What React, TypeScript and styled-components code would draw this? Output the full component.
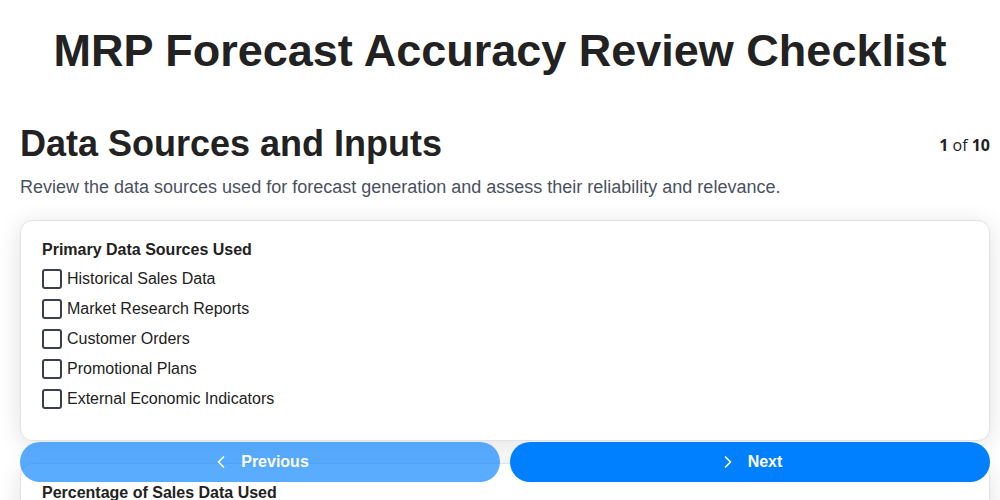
import React from "react";
import styled, { createGlobalStyle } from "styled-components";
import { ChevronLeft, ChevronRight } from "lucide-react";

const GlobalStyle = createGlobalStyle`
  html, body { margin: 0; padding: 0; background: #ffffff; }
  body { font-family: "Liberation Sans", Arial, sans-serif; color: #222222; }
  * { box-sizing: border-box; }
`;

const Page = styled.div`
  padding: 0 10px 80px 20px;
`;

const Title = styled.h1`
  margin: 0 -10px 0 -20px;
  padding-top: 27px;
  text-align: center;
  font-size: 45px;
  line-height: 48px;
  font-weight: 700;
  color: #222222;
`;

const Header = styled.div`
  display: flex;
  justify-content: space-between;
  align-items: flex-start;
  margin-top: 48px;
`;

const StepTitle = styled.h2`
  margin: 0;
  font-size: 36px;
  line-height: 42px;
  font-weight: 700;
  color: #222222;
`;

const Counter = styled.div`
  font-family: "Open Sans", "Liberation Sans", sans-serif;
  font-size: 16px;
  line-height: 20px;
  padding-top: 12px;
  color: #222222;
  b { font-weight: 700; }
`;

const Description = styled.p`
  margin: 10px 0 0;
  font-size: 18px;
  line-height: 24px;
  color: #4a5160;
`;

const Cards = styled.div`
  display: flex;
  flex-direction: column;
  gap: 22px;
  margin-top: 21px;
`;

const Card = styled.div`
  border: 1px solid #e2e2e8;
  border-radius: 12px;
  background: #ffffff;
  box-shadow: 0 4px 24px rgba(0, 0, 0, 0.12);
  padding: 19px 21px 26px;
`;

const QuestionLabel = styled.div`
  font-size: 16px;
  line-height: 20px;
  font-weight: 700;
  color: #222222;
  margin-bottom: 4px;
`;

const OptionList = styled.div`
  display: flex;
  flex-direction: column;
`;

const Option = styled.label`
  display: flex;
  align-items: center;
  gap: 5px;
  height: 30px;
  font-size: 16px;
  color: #222222;
  cursor: pointer;
`;

const Box = styled.span`
  width: 20px;
  height: 20px;
  border: 2px solid #3b3f4c;
  border-radius: 3px;
  background: #ffffff;
  flex-shrink: 0;
`;

const NavBar = styled.div`
  position: fixed;
  left: 20px;
  right: 10px;
  bottom: 18px;
  display: flex;
  gap: 10px;
`;

const NavButton = styled.button<{ $disabled?: boolean }>`
  flex: 1;
  height: 40px;
  border: none;
  border-radius: 20px;
  background: #0080ff;
  opacity: ${(p) => (p.$disabled ? 0.65 : 1)};
  color: #ffffff;
  font-family: "Liberation Sans", Arial, sans-serif;
  font-size: 16px;
  font-weight: 700;
  display: flex;
  align-items: center;
  justify-content: center;
  gap: 10px;
  cursor: pointer;
`;

const questions = [
  {
    label: "Primary Data Sources Used",
    options: [
      "Historical Sales Data",
      "Market Research Reports",
      "Customer Orders",
      "Promotional Plans",
      "External Economic Indicators",
    ],
  },
  {
    label: "Percentage of Sales Data Used",
    options: ["0-25%", "26-50%", "51-75%", "76-100%"],
  },
];

export default function App() {
  return (
    <>
      <GlobalStyle />
      <Page>
        <Title>MRP Forecast Accuracy Review Checklist</Title>
        <Header>
          <StepTitle>Data Sources and Inputs</StepTitle>
          <Counter>
            <b>1</b> of <b>10</b>
          </Counter>
        </Header>
        <Description>
          Review the data sources used for forecast generation and assess their reliability and relevance.
        </Description>
        <Cards>
          {questions.map((q) => (
            <Card key={q.label}>
              <QuestionLabel>{q.label}</QuestionLabel>
              <OptionList>
                {q.options.map((o) => (
                  <Option key={o}>
                    <Box />
                    {o}
                  </Option>
                ))}
              </OptionList>
            </Card>
          ))}
        </Cards>
      </Page>
      <NavBar>
        <NavButton $disabled>
          <ChevronLeft size={20} strokeWidth={2} />
          Previous
        </NavButton>
        <NavButton>
          <ChevronRight size={20} strokeWidth={2} />
          Next
        </NavButton>
      </NavBar>
    </>
  );
}
